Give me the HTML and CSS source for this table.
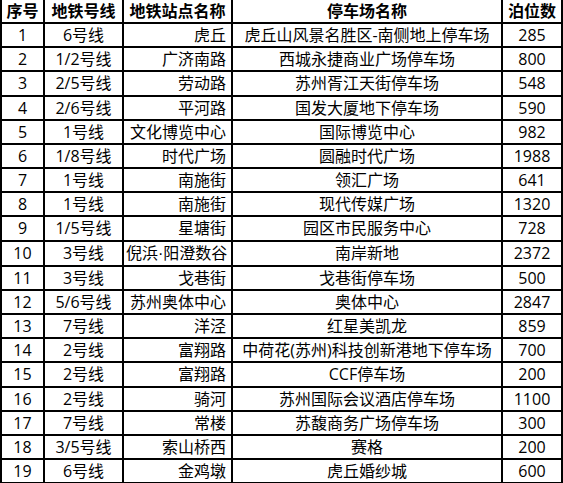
FILE: index.html
```html
<!DOCTYPE html>
<html lang="zh">
<head>
<meta charset="utf-8">
<link rel="stylesheet" href="styles.css">
</head>
<body>
<table class="tbl">
  <colgroup>
    <col class="c1"><col class="c2"><col class="c3"><col class="c4"><col class="c5">
  </colgroup>
  <thead>
    <tr><th>序号</th><th>地铁号线</th><th>地铁站点名称</th><th>停车场名称</th><th>泊位数</th></tr>
  </thead>
  <tbody>
    <tr><td>1</td><td>6号线</td><td class="r">虎丘</td><td>虎丘山风景名胜区-南侧地上停车场</td><td>285</td></tr>
    <tr><td>2</td><td>1/2号线</td><td class="r">广济南路</td><td>西城永捷商业广场停车场</td><td>800</td></tr>
    <tr><td>3</td><td>2/5号线</td><td class="r">劳动路</td><td>苏州胥江天街停车场</td><td>548</td></tr>
    <tr><td>4</td><td>2/6号线</td><td class="r">平河路</td><td>国发大厦地下停车场</td><td>590</td></tr>
    <tr><td>5</td><td>1号线</td><td class="r">文化博览中心</td><td>国际博览中心</td><td>982</td></tr>
    <tr><td>6</td><td>1/8号线</td><td class="r">时代广场</td><td>圆融时代广场</td><td>1988</td></tr>
    <tr><td>7</td><td>1号线</td><td class="r">南施街</td><td>领汇广场</td><td>641</td></tr>
    <tr><td>8</td><td>1号线</td><td class="r">南施街</td><td>现代传媒广场</td><td>1320</td></tr>
    <tr><td>9</td><td>1/5号线</td><td class="r">星塘街</td><td>园区市民服务中心</td><td>728</td></tr>
    <tr><td>10</td><td>3号线</td><td class="r">倪浜<span class="dot">·</span>阳澄数谷</td><td>南岸新地</td><td>2372</td></tr>
    <tr><td>11</td><td>3号线</td><td class="r">戈巷街</td><td>戈巷街停车场</td><td>500</td></tr>
    <tr><td>12</td><td>5/6号线</td><td class="r">苏州奥体中心</td><td>奥体中心</td><td>2847</td></tr>
    <tr><td>13</td><td>7号线</td><td class="r">洋泾</td><td>红星美凯龙</td><td>859</td></tr>
    <tr><td>14</td><td>2号线</td><td class="r">富翔路</td><td>中荷花(苏州)科技创新港地下停车场</td><td>700</td></tr>
    <tr><td>15</td><td>2号线</td><td class="r">富翔路</td><td>CCF停车场</td><td>200</td></tr>
    <tr><td>16</td><td>2号线</td><td class="r">骑河</td><td>苏州国际会议酒店停车场</td><td>1100</td></tr>
    <tr><td>17</td><td>7号线</td><td class="r">常楼</td><td>苏馥商务广场停车场</td><td>300</td></tr>
    <tr><td>18</td><td>3/5号线</td><td class="r">索山桥西</td><td>赛格</td><td>200</td></tr>
    <tr><td>19</td><td>6号线</td><td class="r">金鸡墩</td><td>虎丘婚纱城</td><td>600</td></tr>
  </tbody>
</table>
</body>
</html>
```

FILE: styles.css
```css
html, body {
  margin: 0;
  padding: 0;
  background: #fff;
}

.tbl {
  border-collapse: collapse;
  table-layout: fixed;
  width: 563px;
  margin-top: -2px;
  font-family: "Open Sans", "Noto Sans CJK SC", sans-serif;
  font-size: 16px;
  color: #000;
}

.c1 { width: 43px; }
.c2 { width: 79px; }
.c3 { width: 109px; }
.c4 { width: 270px; }
.c5 { width: 60px; }

.tbl th,
.tbl td {
  border: 2px solid #000;
  padding: 0 2px;
  height: 22.15px;
  line-height: 22.15px;
  text-align: center;
  white-space: nowrap;
  overflow: hidden;
}

.tbl th {
  font-weight: bold;
}

.tbl td.r {
  text-align: right;
  padding-right: 5px;
}

.dot {
  font-family: "Liberation Sans", sans-serif;
}
```
